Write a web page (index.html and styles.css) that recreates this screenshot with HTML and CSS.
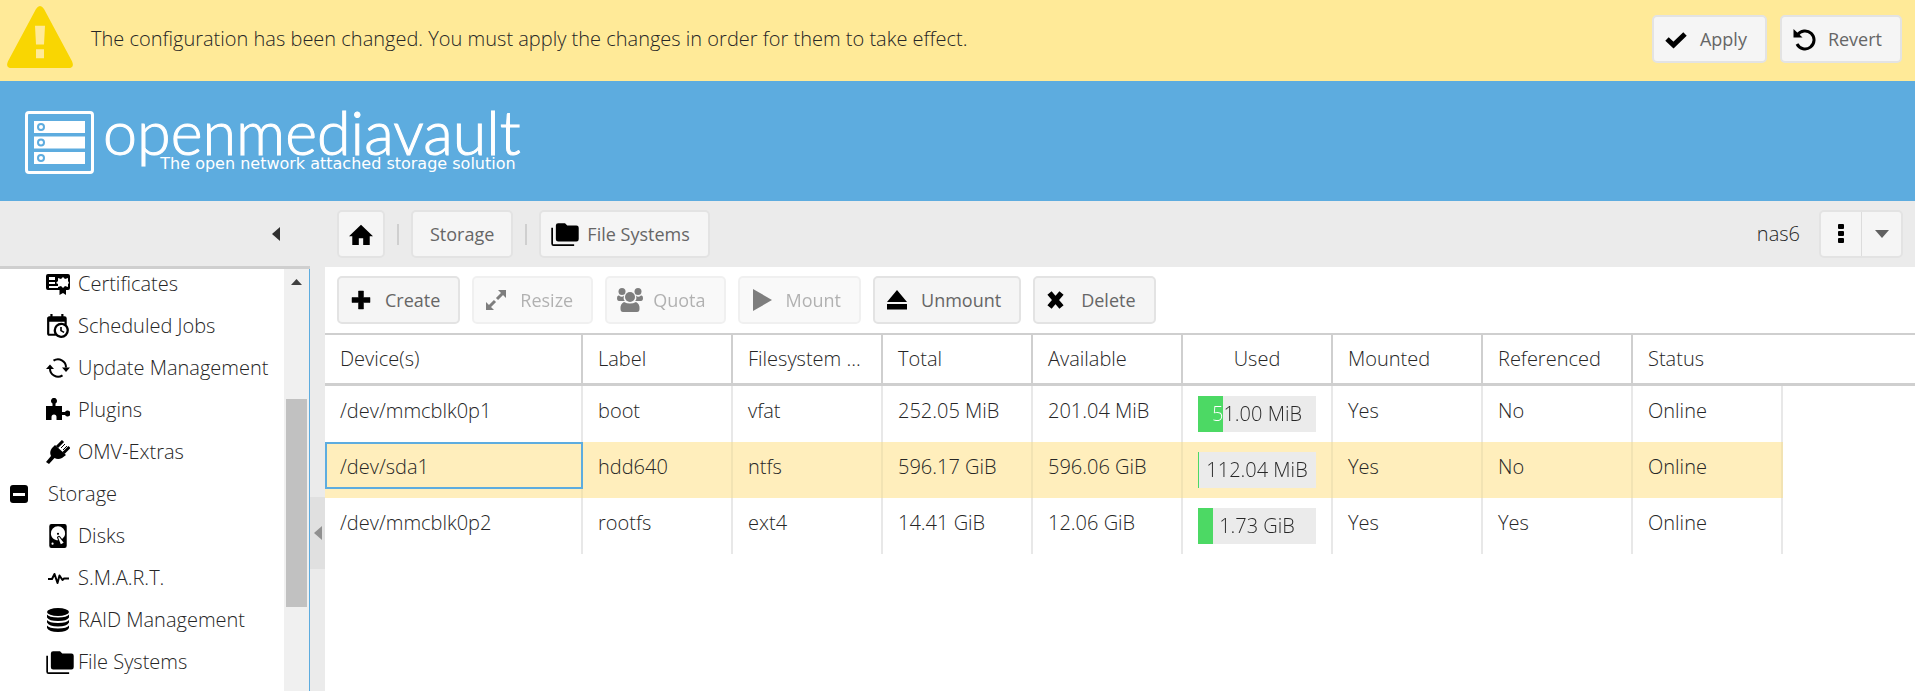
FILE: index.html
```html
<!DOCTYPE html>
<html lang="en">
<head>
<meta charset="utf-8">
<title>openmediavault</title>
<link rel="stylesheet" href="styles.css">
</head>
<body>
<div class="notice">
  <svg class="notice-icon" viewBox="0 0 66 64" preserveAspectRatio="none" aria-hidden="true"><path fill="#f9d602" fill-rule="evenodd" d="M29 3Q33-3 37 3L65 56Q68 63 61 63H5Q-2 63 1 56ZM28 20L29 39H37L38 20ZM29 44V53H37V44Z"/></svg>
  <p class="notice-text">The configuration has been changed. You must apply the changes in order for them to take effect.</p>
  <button class="btn" type="button"><svg class="icon" viewBox="0 0 24 24"><path d="M3 12L9.500 18L21 7" fill="none" stroke="#000" stroke-width="5"/></svg>Apply</button>
  <button class="btn" type="button"><svg class="icon" viewBox="0 0 24 24"><path d="M5.500 8A9 9 0 1 1 5 17" fill="none" stroke="#000" stroke-width="3"/><path d="M1.500 2V10.500H10.500Z"/></svg>Revert</button>
</div>
<header class="brand">
  <svg class="brand-icon" viewBox="0 0 70 64" aria-hidden="true"><rect x="1.500" y="1.500" width="66" height="60" rx="2.500" fill="none" stroke="#fff" stroke-width="3"/><g fill="#fff"><path d="M9 10h51v12H9zM9 25.500h51v12H9zM9 41h51v12H9z"/></g><g fill="#fff" stroke="#5dacdf" stroke-width="2"><circle cx="16" cy="16" r="3"/><circle cx="16" cy="31.500" r="3"/><circle cx="16" cy="47" r="3"/></g></svg>
  <div class="brand-words"><span class="brand-name">openmediavault</span><span class="brand-tag">The open network attached storage solution</span></div>
</header>
<div class="workspace">
  <aside class="sidebar">
    <div class="sidebar-head"><button class="collapse" type="button" aria-label="Collapse navigation"><svg width="8" height="14" viewBox="0 0 8 14"><path fill="#303030" d="M8 0V14L0 7Z"/></svg></button></div>
    <div class="sidebar-body">
      <nav class="tree">
        <a class="node" href="#"><svg class="icon" viewBox="0 0 24 24"><path fill-rule="evenodd" d="M3 2H22Q24 2 24 4V16Q24 18 22 18H20V23L17 21L13.500 23V18H2Q0 18 0 16V4Q0 2 2 2ZM3 5V8H9V5ZM3 10V12H9V10ZM3 14V16H12V14ZM17 5L15 7L12 6V9L10 11L12 12V15L15 14L17 16L19 14L22 15V12L23 11L22 9V6L19 7Z"/></svg>Certificates</a>
        <a class="node" href="#"><svg class="icon" viewBox="2 1 22 22"><path d="M15,13H16.500V15.820L18.940,17.230L18.190,18.530L15,16.690V13M19,8H5V19H9.670C9.240,18.090 9,17.070 9,16A7,7 0 0,1 16,9C17.070,9 18.090,9.240 19,9.670V8M5,21C3.890,21 3,20.100 3,19V5C3,3.890 3.890,3 5,3H6V1H8V3H16V1H18V3H19A2,2 0 0,1 21,5V11.100C22.240,12.360 23,14.090 23,16A7,7 0 0,1 16,23C14.090,23 12.360,22.240 11.100,21H5M16,11.150A4.850,4.850 0 0,0 11.150,16C11.150,18.680 13.320,20.850 16,20.850A4.850,4.850 0 0,0 20.850,16C20.850,13.320 18.680,11.150 16,11.150Z"/></svg>Scheduled Jobs</a>
        <a class="node" href="#"><svg class="icon" viewBox="0 0 24 24"><path d="M4 12.500A8 8 0 0 0 16.500 19.300M20 11.500A8 8 0 0 0 7.500 4.700" fill="none" stroke="#000" stroke-width="2"/><path d="M0 13L4 8.500L8 13ZM16 11.500H24L20 16Z"/></svg>Update Management</a>
        <a class="node" href="#"><svg class="icon" viewBox="0 0 24 24"><path d="M0 8H6.500V5.500A3 3 0 1 1 9.500 5.500V8H16V14H19A3 3 0 1 1 19 17H16V22H10.500V19A2.500 2.500 0 0 0 5.500 19V22H0Z"/></svg>Plugins</a>
        <a class="node" href="#"><svg class="icon" viewBox="0 0 24 24"><path d="M9 5L20 15L16 18Q12 20 8.500 18L3 24L0 22L5 16Q3 12 6 8Z"/><path d="M11 7L17 1M17.500 13L23.500 7" stroke="#000" stroke-width="3"/><path d="M15 8L19 4M17 10L21 6" stroke="#000"/></svg>OMV-Extras</a>
        <a class="node group" href="#"><svg class="expander" viewBox="0 0 18 18"><rect width="18" height="18" rx="3"/><path fill="#fff" d="M3 8h12v3H3z"/></svg>Storage</a>
        <a class="node" href="#"><svg class="icon" viewBox="1 1 22 22"><path d="M6,1H18A2,2 0 0,1 20,3V21A2,2 0 0,1 18,23H6A2,2 0 0,1 4,21V3A2,2 0 0,1 6,1M12,3A6.500,6.500 0 0,0 5.500,10C5.500,13.310 8.690,16 12.100,16L11.220,13.770C10.950,13.290 11.110,12.680 11.590,12.400L12.450,11.900C12.930,11.630 13.540,11.790 13.820,12.270L15.740,14.690C17.120,13.590 18.500,11.900 18.500,10A6.500,6.500 0 0,0 12,3M12,9A1,1 0 0,1 13,10A1,1 0 0,1 12,11A1,1 0 0,1 11,10A1,1 0 0,1 12,9M7,18A1,1 0 0,0 6,19A1,1 0 0,0 7,20A1,1 0 0,0 8,19A1,1 0 0,0 7,18M12.090,13.270L14.580,19.580L17.170,18.080L12.950,12.770L12.090,13.270Z"/></svg>Disks</a>
        <a class="node" href="#"><svg class="icon" viewBox="0 0 24 24"><path d="M2 13H6L8.500 8L11.500 17L13.500 9.500L16.500 14L18 12.500H23" fill="none" stroke="#000" stroke-width="2" stroke-linejoin="round"/></svg>S.M.A.R.T.</a>
        <a class="node" href="#"><svg class="icon" viewBox="0 0 24 24"><ellipse cx="12" cy="4" rx="11" ry="4"/><path d="M1 6.500Q3 9.500 12 9.500T23 6.500V9.500Q21 13 12 13T1 9.500ZM1 12Q3 15 12 15T23 12V14.500Q21 18.500 12 18.500T1 14.500ZM1 17.500Q3 20.500 12 20.500T23 17.500V20Q21 24 12 24T1 20Z"/></svg>RAID Management</a>
        <a class="node" href="#"><svg class="icon wide" viewBox="0 1 24 21"><path d="M22,4H14L12,2H6A2,2 0 0,0 4,4V16A2,2 0 0,0 6,18H22A2,2 0 0,0 24,16V6A2,2 0 0,0 22,4M1.500,6H0V20A2,2 0 0,0 2,22H20V20.500H1.500V6Z"/></svg>File Systems</a>
      </nav>
      <div class="scrollbar"><svg class="scroll-up" viewBox="0 0 11 6"><path fill="#404040" d="M5.500 0L11 6H0Z"/></svg><div class="scroll-thumb"></div></div>
    </div>
  </aside>
  <div class="splitter"><button class="splitter-handle" type="button" aria-label="Collapse sidebar"><svg width="8" height="14" viewBox="0 0 8 14"><path fill="#909090" d="M8 0V14L0 7Z"/></svg></button></div>
  <main class="content">
    <div class="crumbs">
      <button class="btn square" type="button" aria-label="Home"><svg class="icon" viewBox="1 0 22 22"><path d="M10,21V15H14V21H20V13H23L12,2.500L1,13H4V21Z"/></svg></button>
      <span class="sep"></span>
      <button class="btn plain" type="button">Storage</button>
      <span class="sep"></span>
      <button class="btn" type="button"><svg class="icon wide" viewBox="0 1 24 21"><path d="M22,4H14L12,2H6A2,2 0 0,0 4,4V16A2,2 0 0,0 6,18H22A2,2 0 0,0 24,16V6A2,2 0 0,0 22,4M1.500,6H0V20A2,2 0 0,0 2,22H20V20.500H1.500V6Z"/></svg>File Systems</button>
      <span class="host">nas6</span>
      <div class="split">
        <button class="split-part" type="button" aria-label="Menu"><svg width="6" height="20" viewBox="0 0 6 20"><rect width="6" height="5" rx="1"/><rect y="7" width="6" height="5" rx="1"/><rect y="14" width="6" height="5" rx="1"/></svg></button>
        <button class="split-part" type="button" aria-label="More"><svg width="14" height="8" viewBox="0 0 14 8"><path fill="#606060" d="M0 0H14L7 8Z"/></svg></button>
      </div>
    </div>
    <div class="toolbar">
      <button class="btn" type="button"><svg class="icon" viewBox="0 0 24 24"><path d="M9.500 3h5v6.500H21v5h-6.500V21h-5v-6.500H3v-5h6.500z" stroke="#000" stroke-linejoin="round" stroke-width=".5"/></svg>Create</button>
      <button class="btn" type="button" disabled><svg class="icon" viewBox="0 0 24 24"><path d="M2 22V14L10 22ZM22 2V10L14 2Z"/><path d="M4 20L11 13M13 11L20 4" stroke="#000" stroke-width="3"/></svg>Resize</button>
      <button class="btn" type="button" disabled><svg class="icon group-icon" viewBox="0 0 26 24"><circle cx="5" cy="3.500" r="3.500"/><circle cx="21" cy="3.500" r="3.500"/><path d="M2 7.500Q5 10 7 7.500Q6 12 8 13H2Q0 13 0 10T2 7.500ZM24 7.500Q21 10 19 7.500Q20 12 18 13H24Q26 13 26 10T24 7.500Z"/><circle cx="13" cy="9" r="5"/><path d="M7 14Q13 17 19 14Q23 16 22.500 21Q22.500 24 20 24H6Q3.500 24 3.500 21Q3 16 7 14Z"/></svg>Quota</button>
      <button class="btn" type="button" disabled><svg class="icon" viewBox="0 0 24 24"><path d="M3 1L22 12L3 23Z"/></svg>Mount</button>
      <button class="btn" type="button"><svg class="icon" viewBox="0 0 24 24"><path d="M12 2L22 14H2ZM2 16h20v5.500H2z"/></svg>Unmount</button>
      <button class="btn" type="button"><svg class="icon" viewBox="0 0 24 24"><path d="M4.500 5L16.500 19M16.500 5L4.500 19" stroke="#000" stroke-width="5.500"/></svg>Delete</button>
    </div>
    <table class="grid">
      <colgroup><col class="col-device"><col span="8" class="col"><col></colgroup>
      <thead><tr><th>Device(s)</th><th>Label</th><th>Filesystem ...</th><th>Total</th><th>Available</th><th class="used">Used</th><th>Mounted</th><th>Referenced</th><th class="last">Status</th><th class="filler"></th></tr></thead>
      <tbody>
        <tr><td>/dev/mmcblk0p1</td><td>boot</td><td>vfat</td><td>252.05 MiB</td><td>201.04 MiB</td><td><div class="bar" style="--used:21%"><span>51.00 MiB</span></div></td><td>Yes</td><td>No</td><td>Online</td><td class="filler"></td></tr>
        <tr class="selected"><td class="focused">/dev/sda1</td><td>hdd640</td><td>ntfs</td><td>596.17 GiB</td><td>596.06 GiB</td><td><div class="bar" style="--used:1%"><span>112.04 MiB</span></div></td><td>Yes</td><td>No</td><td>Online</td><td class="filler"></td></tr>
        <tr><td>/dev/mmcblk0p2</td><td>rootfs</td><td>ext4</td><td>14.41 GiB</td><td>12.06 GiB</td><td><div class="bar" style="--used:13%"><span>1.73 GiB</span></div></td><td>Yes</td><td>Yes</td><td>Online</td><td class="filler"></td></tr>
      </tbody>
    </table>
  </main>
</div>
</body>
</html>
```
FILE: styles.css
```css
* { box-sizing: border-box; }
body {
  margin: 0;
  height: 100vh;
  display: flex;
  flex-direction: column;
  overflow: hidden;
  background: #fff;
  color: #262626;
  font: 300 20px/30px "Open Sans", "Noto Sans", sans-serif;
}
button { font: inherit; color: inherit; padding: 0; border: 0; background: none; }

.btn {
  display: inline-flex;
  align-items: center;
  gap: 12px;
  height: 48px;
  padding: 0 18px 0 10px;
  border: 2px solid #e3e3e3;
  border-radius: 5px;
  background: #f5f5f5;
  color: #666;
  font-size: 18px;
  font-weight: 400;
  white-space: nowrap;
}
.btn:disabled { opacity: .5; }
.btn.square { width: 48px; padding: 0; justify-content: center; }
.btn.plain { padding: 0 17px; }
.icon { width: 24px; height: 24px; flex: none; }
.icon.wide { width: 28px; margin-right: -4px; }
.icon.group-icon { width: 26px; margin-right: -2px; }

.notice {
  display: flex;
  align-items: center;
  gap: 13px;
  height: 81px;
  flex: none;
  padding: 0 13px 4px 7px;
  background: #ffea98;
}
.notice-icon { width: 66px; height: 63px; margin-top: -2px; }
.notice-text { flex: 1; margin: 0 0 0 5px; }

.brand {
  display: flex;
  align-items: flex-start;
  gap: 8px;
  height: 120px;
  flex: none;
  padding: 30px 25px;
  background: #5dacdf;
  color: #fff;
}
.brand-icon { width: 70px; height: 64px; flex: none; }
.brand-words { display: flex; flex-direction: column; align-items: flex-end; }
.brand-name { font: 300 61px/42px Lato, sans-serif; -webkit-text-stroke: 1px #fff; }
.brand-tag { font: 16px/22px "DejaVu Sans", sans-serif; margin-right: 5px; }

.workspace { flex: 1; display: flex; min-height: 0; }
.sidebar { width: 310px; flex: none; display: flex; flex-direction: column; background: #ebebeb; }
.sidebar-head {
  height: 68px;
  flex: none;
  display: flex;
  align-items: center;
  justify-content: flex-end;
  padding-right: 30px;
  border-bottom: 3px solid #cfcfcf;
}
.collapse { display: flex; }
.sidebar-body { flex: 1; display: flex; min-height: 0; background: #fff; border-right: 1px solid #5dacdf; }
.tree { flex: 1; margin-top: -6px; overflow: hidden; clip-path: inset(6px 0 0 0); }
.node {
  display: flex;
  align-items: center;
  gap: 8px;
  height: 42px;
  padding-left: 46px;
  color: inherit;
  text-decoration: none;
  white-space: nowrap;
}
.node.group { padding-left: 10px; gap: 20px; }
.expander { width: 18px; height: 18px; }
.scrollbar { width: 25px; background: #f0f0f0; padding: 10px 2px; }
.scroll-up { display: block; width: 11px; height: 6px; margin: 0 auto; }
.scroll-thumb { height: 208px; margin-top: 114px; background: #c1c1c1; }

.splitter { width: 15px; flex: none; background: #ebebeb; }
.splitter-handle {
  display: flex;
  align-items: center;
  justify-content: center;
  width: 15px;
  height: 72px;
  margin-top: 296px;
  background: #e0e0e0;
}

.content { flex: 1; min-width: 0; }
.crumbs, .toolbar { display: flex; align-items: center; height: 66px; padding: 0 12px; gap: 12px; }
.crumbs { background: #ebebeb; }
.sep { width: 2px; height: 21px; background: #cfcfcf; }
.host { margin-left: auto; margin-right: 7px; }
.split { display: flex; height: 48px; border: 2px solid #e3e3e3; border-radius: 5px; background: #f5f5f5; }
.split-part { display: flex; align-items: center; justify-content: center; width: 40px; }
.split-part + .split-part { border-left: 1px solid #dcdcdc; }

.grid { width: 100%; table-layout: fixed; border-spacing: 0; border-top: 2px solid #cfcfcf; }
.col-device { width: 258px; }
.col { width: 150px; }
.grid th {
  height: 51px;
  padding: 0 15px;
  border-right: 2px solid #cfcfcf;
  border-bottom: 3px solid #cfcfcf;
  font-weight: inherit;
  text-align: left;
  white-space: nowrap;
}
.grid th.used { text-align: center; }
.grid th.last, .grid th.filler { border-right: 0; }
.grid td {
  height: 56px;
  padding: 10px 15px;
  border-right: 2px solid #e8e8e8;
  vertical-align: top;
  white-space: nowrap;
}
.grid td.filler { border: 0; }
.selected td:not(.filler) { background: #ffeebc; border-color: #f2e3b3; }
.focused { position: relative; }
.focused::after { content: ""; position: absolute; inset: 0 -2px 9px 0; border: 2px solid #5dacdf; }
.bar { background: linear-gradient(90deg, #4cd964 var(--used), #ebebeb var(--used)); }
.bar span {
  display: block;
  line-height: 36px;
  text-align: center;
  color: transparent;
  background: linear-gradient(90deg, #fff var(--used), #262626 var(--used));
  background-clip: text;
  -webkit-background-clip: text;
}
```
